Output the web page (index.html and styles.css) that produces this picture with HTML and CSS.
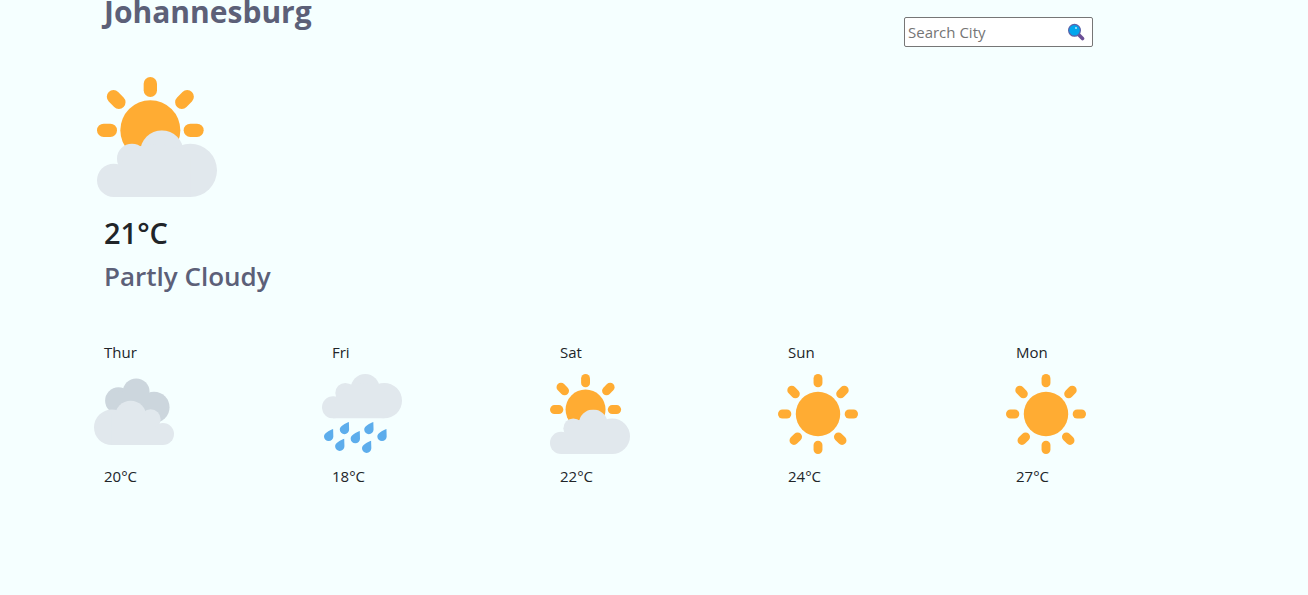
FILE: index.html
```html
<!DOCTYPE html>
<html lang="en">
<head>
<meta charset="utf-8">
<meta name="viewport" content="width=device-width, initial-scale=1">
<title>Weather</title>
<link rel="stylesheet" href="styles.css">
</head>
<body>
<svg class="sprite" aria-hidden="true">
  <defs>
    <symbol id="cloud" viewBox="0 0 36 20">
      <circle cx="5" cy="15" r="5"/>
      <circle cx="10.500" cy="8.500" r="4.500"/>
      <circle cx="19.450" cy="6.500" r="6.500"/>
      <circle cx="28" cy="12" r="8"/>
      <path d="M5 20V13l2-3 4-5 8-1 7 2 2 2v12z"/>
    </symbol>
    <symbol id="partly-cloudy" viewBox="0 0 36 36">
      <g fill="#ffac33">
        <circle cx="16" cy="16" r="9"/>
        <rect x="14" y="0" width="4" height="6" rx="2"/>
        <rect x="0" y="14" width="6" height="4" rx="2"/>
        <rect x="26" y="14" width="6" height="4" rx="2"/>
        <rect x="2.600" y="4.750" width="6.300" height="4" rx="2" transform="rotate(45 5.750 6.750)"/>
        <rect x="23.100" y="4.750" width="6.300" height="4" rx="2" transform="rotate(-45 26.250 6.750)"/>
      </g>
      <use href="#cloud" y="16" width="36" height="20" fill="#e1e8ed"/>
    </symbol>
    <symbol id="cloudy" viewBox="0 0 36 36">
      <g fill="#ccd6dd">
        <circle cx="11" cy="12" r="6"/>
        <circle cx="19" cy="8" r="6"/>
        <circle cx="27" cy="15" r="7"/>
        <path d="M11 8h13l3 12H11z"/>
      </g>
      <g fill="#e1e8ed">
        <circle cx="8" cy="24" r="8"/>
        <circle cx="16.500" cy="19" r="7"/>
        <circle cx="25.500" cy="20.400" r="4.500"/>
        <circle cx="31" cy="27" r="5"/>
        <path d="M8 32V18h15l5 6 3 1v7z"/>
      </g>
    </symbol>
    <symbol id="rain" viewBox="0 0 36 36">
      <use href="#cloud" width="36" height="20" fill="#e1e8ed"/>
      <g fill="#5dadec">
        <path id="drop" d="M5 24.700C3.500 25.400.9 26.400.9 28.100a2.100 2.100 0 0 0 4.200 0z"/>
        <use href="#drop" x="7.100" y="-3.100"/>
        <use href="#drop" x="12" y="1"/>
        <use href="#drop" x="18.100" y="-3.100"/>
        <use href="#drop" x="24"/>
        <use href="#drop" x="5" y="4.400"/>
        <use href="#drop" x="17.100" y="5.300"/>
      </g>
    </symbol>
    <symbol id="sunny" viewBox="0 0 36 36">
      <g fill="#ffac33">
        <circle cx="18" cy="18" r="10"/>
        <rect x="16" y="0" width="4" height="6" rx="2"/>
        <rect x="16" y="30" width="4" height="6" rx="2"/>
        <rect x="0" y="16" width="6" height="4" rx="2"/>
        <rect x="30" y="16" width="6" height="4" rx="2"/>
        <rect x="3.850" y="6.100" width="6.300" height="4" rx="2" transform="rotate(45 7 8.100)"/>
        <rect x="25.850" y="6.100" width="6.300" height="4" rx="2" transform="rotate(-45 29 8.100)"/>
        <rect x="4.850" y="27.100" width="6.300" height="4" rx="2" transform="rotate(-45 8 29.100)"/>
        <rect x="24.850" y="27.100" width="6.300" height="4" rx="2" transform="rotate(45 28 29.100)"/>
      </g>
    </symbol>
  </defs>
</svg>
<main class="page">
  <header class="top">
    <h1 class="city">Johannesburg</h1>
    <form class="search">
      <input class="search-input" type="text" placeholder="Search City" aria-label="Search City">
      <svg class="search-icon" viewBox="0 0 18 18" aria-hidden="true">
        <path d="M11.500 11.500l4 4" stroke="#6b4f96" stroke-width="3.600" stroke-linecap="round"/>
        <circle cx="7.500" cy="7.300" r="5.900" fill="#00a6ed" stroke="#5c60a8" stroke-width="1.200"/>
        <circle cx="9" cy="5" r="1" fill="#b5e6fb"/>
      </svg>
    </form>
  </header>
  <section class="current">
    <svg class="current-icon" role="img" aria-label="Partly cloudy"><use href="#partly-cloudy"/></svg>
    <p class="temperature">21°C</p>
    <h2 class="condition">Partly Cloudy</h2>
  </section>
  <section class="forecast">
    <article class="day"><span>Thur</span><svg class="day-icon" aria-hidden="true"><use href="#cloudy"/></svg><span>20°C</span></article>
    <article class="day"><span>Fri</span><svg class="day-icon" aria-hidden="true"><use href="#rain"/></svg><span>18°C</span></article>
    <article class="day"><span>Sat</span><svg class="day-icon" aria-hidden="true"><use href="#partly-cloudy"/></svg><span>22°C</span></article>
    <article class="day"><span>Sun</span><svg class="day-icon" aria-hidden="true"><use href="#sunny"/></svg><span>24°C</span></article>
    <article class="day"><span>Mon</span><svg class="day-icon" aria-hidden="true"><use href="#sunny"/></svg><span>27°C</span></article>
  </section>
</main>
</body>
</html>
```
FILE: styles.css
```css
* {
  box-sizing: border-box;
}

body {
  margin: 0;
  background: #f5ffff;
  color: #212529;
  font-family: "Open Sans", "Noto Sans", sans-serif;
  font-size: 15px;
  line-height: 24px;
}

.sprite {
  position: absolute;
  width: 0;
  height: 0;
}

.page {
  padding: 0 64px 0 104px;
}

.top {
  display: flex;
  justify-content: space-between;
  align-items: flex-end;
  margin-top: -8px;
  padding-right: 151px;
}

.city {
  margin: 0 0 15px;
  color: #5c6078;
  font-size: 30px;
  font-weight: 700;
  line-height: 40px;
}

.search {
  position: relative;
  display: flex;
}

.search-input {
  width: 189px;
  height: 30px;
  padding: 0 28px 0 3px;
  border: 1px solid #767676;
  border-radius: 2px;
  background: #fff;
  color: inherit;
  font: inherit;
}

.search-input::placeholder {
  color: #757575;
  opacity: 1;
}

.search-icon {
  position: absolute;
  top: 6px;
  right: 8px;
  width: 18px;
  height: 18px;
}

.current {
  padding-top: 30px;
}

.current-icon {
  display: block;
  width: 120px;
  height: 120px;
  margin-left: -7px;
}

.temperature {
  margin: 16px 0 3px;
  font-size: 29px;
  font-weight: 600;
  line-height: 40px;
}

.condition {
  margin: 0;
  color: #5c6078;
  font-size: 26px;
  font-weight: 600;
  line-height: 40px;
}

.forecast {
  display: grid;
  grid-template-columns: repeat(5, 1fr);
  margin-top: 44px;
}

.day {
  display: flex;
  flex-direction: column;
}

.day-icon {
  width: 80px;
  height: 80px;
  margin: 10px 0 10px -10px;
}
```
